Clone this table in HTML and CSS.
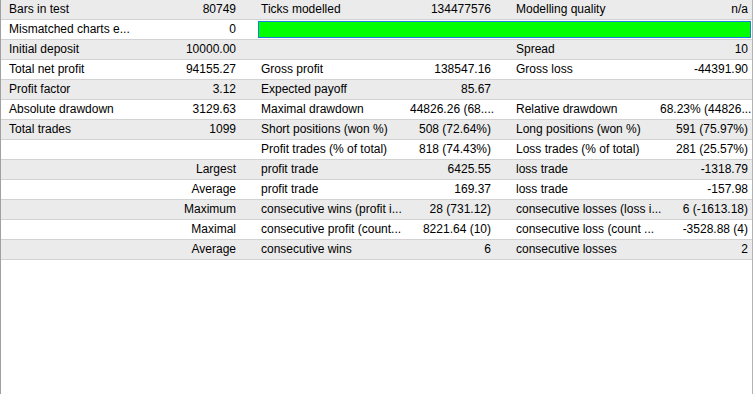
FILE: index.html
```html
<!DOCTYPE html>
<html>
<head>
<meta charset="utf-8">
<link rel="stylesheet" href="styles.css">
</head>
<body>
<div class="report">
  <div class="row">
    <div class="la">Bars in test</div><div class="va">80749</div>
    <div class="lb">Ticks modelled</div><div class="vb">134477576</div>
    <div class="lc">Modelling quality</div><div class="vc">n/a</div>
  </div>
  <div class="row">
    <div class="la">Mismatched charts e...</div><div class="va">0</div>
    <div class="bar-cell"><div class="bar"></div></div>
  </div>
  <div class="row">
    <div class="la">Initial deposit</div><div class="va">10000.00</div>
    <div class="lb"></div><div class="vb"></div>
    <div class="lc">Spread</div><div class="vc">10</div>
  </div>
  <div class="row">
    <div class="la">Total net profit</div><div class="va">94155.27</div>
    <div class="lb">Gross profit</div><div class="vb">138547.16</div>
    <div class="lc">Gross loss</div><div class="vc">-44391.90</div>
  </div>
  <div class="row">
    <div class="la">Profit factor</div><div class="va">3.12</div>
    <div class="lb">Expected payoff</div><div class="vb">85.67</div>
    <div class="lc"></div><div class="vc"></div>
  </div>
  <div class="row">
    <div class="la">Absolute drawdown</div><div class="va">3129.63</div>
    <div class="lb">Maximal drawdown</div><div class="vb">44826.26 (68....</div>
    <div class="lc">Relative drawdown</div><div class="vc">68.23% (44826...</div>
  </div>
  <div class="row">
    <div class="la">Total trades</div><div class="va">1099</div>
    <div class="lb">Short positions (won %)</div><div class="vb">508 (72.64%)</div>
    <div class="lc">Long positions (won %)</div><div class="vc">591 (75.97%)</div>
  </div>
  <div class="row">
    <div class="la"></div><div class="va"></div>
    <div class="lb">Profit trades (% of total)</div><div class="vb">818 (74.43%)</div>
    <div class="lc">Loss trades (% of total)</div><div class="vc">281 (25.57%)</div>
  </div>
  <div class="row">
    <div class="la"></div><div class="va">Largest</div>
    <div class="lb">profit trade</div><div class="vb">6425.55</div>
    <div class="lc">loss trade</div><div class="vc">-1318.79</div>
  </div>
  <div class="row">
    <div class="la"></div><div class="va">Average</div>
    <div class="lb">profit trade</div><div class="vb">169.37</div>
    <div class="lc">loss trade</div><div class="vc">-157.98</div>
  </div>
  <div class="row">
    <div class="la"></div><div class="va">Maximum</div>
    <div class="lb">consecutive wins (profit i...</div><div class="vb">28 (731.12)</div>
    <div class="lc">consecutive losses (loss i...</div><div class="vc">6 (-1613.18)</div>
  </div>
  <div class="row">
    <div class="la"></div><div class="va">Maximal</div>
    <div class="lb">consecutive profit (count...</div><div class="vb">8221.64 (10)</div>
    <div class="lc">consecutive loss (count ...</div><div class="vc">-3528.88 (4)</div>
  </div>
  <div class="row">
    <div class="la"></div><div class="va">Average</div>
    <div class="lb">consecutive wins</div><div class="vb">6</div>
    <div class="lc">consecutive losses</div><div class="vc">2</div>
  </div>
</div>
</body>
</html>
```

FILE: styles.css
```css
html, body {
  margin: 0;
  padding: 0;
  background: #ffffff;
}

body {
  width: 754px;
  height: 394px;
  overflow: hidden;
}

.report {
  box-sizing: border-box;
  width: 753px;
  height: 394px;
  border-left: 1px solid #a0a0a0;
  border-right: 1px solid #b4b4b4;
  background: #ffffff;
  font-family: "Liberation Sans", Arial, sans-serif;
  font-size: 12px;
  color: #000000;
}

.row {
  display: grid;
  grid-template-columns: 134px 121px 154px 100px 150px 92px;
  height: 19px;
  line-height: 19px;
  border-bottom: 1px solid #d2d2d2;
  background: #ffffff;
}

.row:nth-child(odd) {
  background: #ebebeb;
}

.row > div {
  white-space: nowrap;
  overflow: visible;
}

.la {
  padding-left: 8px;
}

.va {
  text-align: right;
  padding-right: 20px;
}

.lb {
  padding-left: 5px;
}

.vb {
  text-align: right;
  padding-right: 19px;
}

.lc {
  padding-left: 6px;
}

.vc {
  text-align: right;
  padding-right: 4px;
}

.bar-cell {
  grid-column: 3 / 7;
  padding: 1px 1px 1px 2px;
}

.bar {
  box-sizing: border-box;
  height: 17px;
  background: #00ff00;
  border: 1px solid #1a7fd6;
}
```
